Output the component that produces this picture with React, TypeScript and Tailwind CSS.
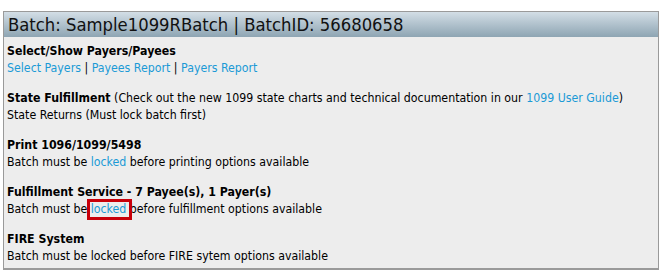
import React from "react";

const link = "text-[#1b9ad6]";

export default function App() {
  return (
    <div className="w-[665px] h-[280px] bg-white pt-[11px] pl-[3px]" style={{ fontFamily: '"DejaVu Sans Condensed", "DejaVu Sans", Tahoma, sans-serif' }}>
      <div className="w-[656px] h-[259px] border border-[#9a9a9a] border-b-2 bg-[#ededed]">
        <div className="h-[25px] flex items-center pl-[4px] bg-gradient-to-b from-[#d3dee6] to-[#8ea5b3] text-[18.3px] text-[#111]">
          Batch: Sample1099RBatch | BatchID: 56680658
        </div>
        <div className="pl-[3px] pt-[6px] text-[12.25px] leading-[17px] text-black">
          <div>
            <div className="font-bold">Select/Show Payers/Payees</div>
            <div>
              <span className={link}>Select Payers</span> | <span className={link}>Payees Report</span> | <span className={link}>Payers Report</span>
            </div>
          </div>
          <div className="mt-[13px]">
            <div>
              <span className="font-bold">State Fulfillment</span> (Check out the new 1099 state charts and technical documentation in our <span className={link}>1099 User Guide</span>)
            </div>
            <div>State Returns (Must lock batch first)</div>
          </div>
          <div className="mt-[13px]">
            <div className="font-bold">Print 1096/1099/5498</div>
            <div>
              Batch must be <span className={link}>locked</span> before printing options available
            </div>
          </div>
          <div className="mt-[13px]">
            <div className="font-bold">Fulfillment Service - 7 Payee(s), 1 Payer(s)</div>
            <div>
              Batch must be <span className={`${link} relative`}>locked<span className="absolute left-[-4px] right-[-6px] top-[-3px] bottom-[-4px] border-[3px] border-[#c8000a]"></span></span> before fulfillment options available
            </div>
          </div>
          <div className="mt-[13px]">
            <div className="font-bold">FIRE System</div>
            <div>Batch must be locked before FIRE sytem options available</div>
          </div>
        </div>
      </div>
    </div>
  );
}
